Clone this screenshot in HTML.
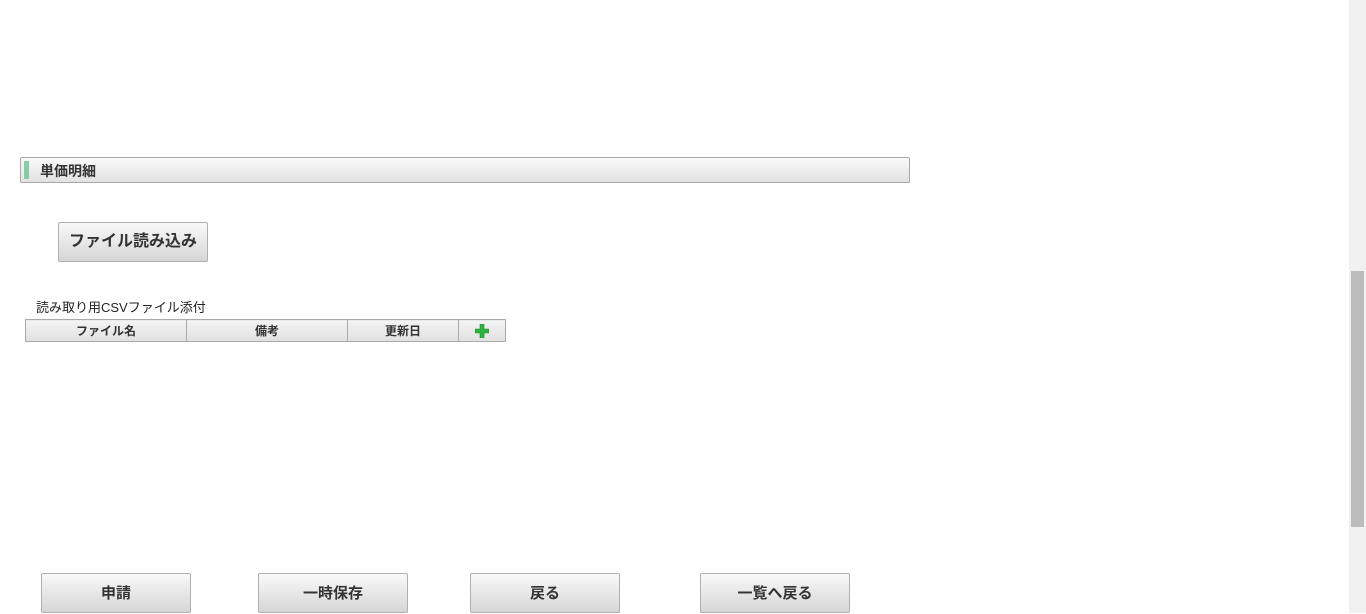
<!DOCTYPE html>
<html><head><meta charset="utf-8"><style>
html,body{margin:0;padding:0;width:1366px;height:613px;overflow:hidden;background:#fff;font-family:"Liberation Sans","Noto Sans CJK JP",sans-serif;color:#333}
.abs{position:absolute;box-sizing:border-box}
.bar{left:20px;top:157px;width:890px;height:26px;border:1px solid #a8a8a8;border-radius:2px;background:linear-gradient(#fafafa,#e2e2e2);}
.bar .acc{position:absolute;left:3px;top:3px;width:5px;height:18px;background:#86cca8}
.bar span{position:absolute;left:19px;top:3px;font-size:14px;font-weight:bold;color:#333}
.btn{border:1px solid #b0b0b0;border-radius:2px;background:linear-gradient(#f9f9f9,#d6d6d6);font-weight:bold;text-align:center;font-size:15px;color:#333}
table{border-collapse:collapse;font-size:12px;font-weight:bold;table-layout:fixed}
td{border:1px solid #aaa;background:linear-gradient(#f4f4f4,#e0e0e0);text-align:center;height:22px;padding:0;box-sizing:border-box}
</style></head><body>
<div class="abs bar"><div class="acc"></div><span>単価明細</span></div>
<div class="abs btn" style="left:58px;top:222px;width:150px;height:40px;line-height:38px;font-size:16px">ファイル読み込み</div>
<div class="abs" style="left:36px;top:297px;font-size:13px;color:#222">読み取り用CSVファイル添付</div>
<table class="abs" style="left:25px;top:319px;width:480px">
<tr><td style="width:161px">ファイル名</td><td style="width:161px">備考</td><td style="width:111px">更新日</td><td style="width:47px"><svg width="14" height="14" viewBox="0 0 14 14" style="vertical-align:middle"><path d="M5 0h4v5h5v4H9v5H5V9H0V5h5z" fill="#2fb33f" stroke="#1e8f2c" stroke-width=".6"/></svg></td></tr>
</table>
<div class="abs btn" style="left:41px;top:573px;width:150px;height:40px;line-height:40px">申請</div>
<div class="abs btn" style="left:258px;top:573px;width:150px;height:40px;line-height:40px">一時保存</div>
<div class="abs btn" style="left:470px;top:573px;width:150px;height:40px;line-height:40px">戻る</div>
<div class="abs btn" style="left:700px;top:573px;width:150px;height:40px;line-height:40px">一覧へ戻る</div>
<div class="abs" style="left:1349px;top:0;width:17px;height:613px;background:#f1f1f1"></div>
<div class="abs" style="left:1351px;top:271px;width:13px;height:256px;background:#bcbcbc"></div>
</body></html>
